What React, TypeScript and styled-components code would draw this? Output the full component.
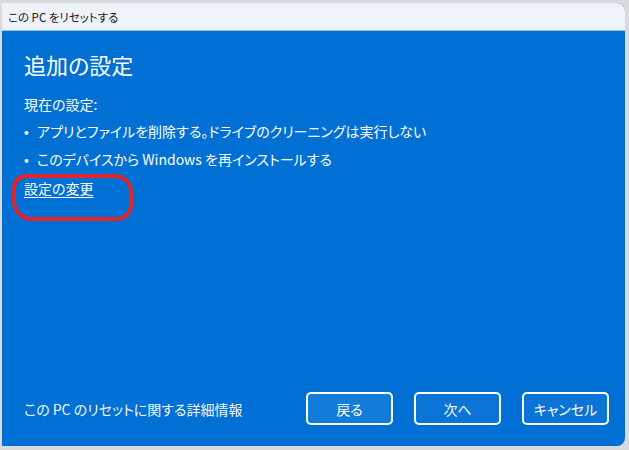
import React from 'react';
import styled, { createGlobalStyle } from 'styled-components';

const GlobalStyle = createGlobalStyle`
  html, body {
    margin: 0;
    padding: 0;
    background: #d9dadc;
  }
  body {
    font-family: "Noto Sans CJK JP", "Noto Sans", sans-serif;
    font-feature-settings: "palt";
  }
`;

const settings = [
  'アプリとファイルを削除する。ドライブのクリーニングは実行しない',
  'このデバイスから Windows を再インストールする',
];

const App: React.FC = () => {
  return (
    <Page>
      <GlobalStyle />
      <Window>
        <TitleBar>この PC をリセットする</TitleBar>
        <Body>
          <Heading>追加の設定</Heading>
          <Label>現在の設定:</Label>
          <BulletList>
            {settings.map((s) => (
              <Bullet key={s}>{s}</Bullet>
            ))}
          </BulletList>
          <LinkWrap>
            <ChangeLink href="#">設定の変更</ChangeLink>
            <Highlight />
          </LinkWrap>
          <Footer>
            <InfoText>この PC のリセットに関する詳細情報</InfoText>
            <Buttons>
              <Button $tint>戻る</Button>
              <Button>次へ</Button>
              <Button>キャンセル</Button>
            </Buttons>
          </Footer>
        </Body>
      </Window>
    </Page>
  );
};
export default App;

const Page = styled.div`
  width: 629px;
  height: 450px;
  padding: 3px 0 0 2px;
  box-sizing: border-box;
  overflow: hidden;
`;

const Window = styled.div`
  width: 623px;
  height: 443px;
  display: flex;
  flex-direction: column;
  border-radius: 0 8px 8px 0;
  overflow: hidden;
  background: #0070d5;
`;

const TitleBar = styled.div`
  height: 27px;
  flex-shrink: 0;
  display: flex;
  align-items: center;
  padding-left: 6px;
  background: #eef2f9;
  border-bottom: 1px solid #8fc0ec;
  color: #1a1a1a;
  font-size: 11.5px;
`;

const Body = styled.div`
  flex: 1;
  display: flex;
  flex-direction: column;
  padding: 18px 16px 21px 22px;
  color: #ffffff;
`;

const Heading = styled.h1`
  margin: 0 0 15px;
  font-size: 22px;
  font-weight: 400;
  line-height: 30px;
`;

const Label = styled.div`
  font-size: 14px;
  line-height: 20px;
  margin-bottom: 7px;
`;

const BulletList = styled.ul`
  list-style: none;
  margin: 0;
  padding: 0;
  display: flex;
  flex-direction: column;
  gap: 8px;
`;

const Bullet = styled.li`
  font-size: 14px;
  line-height: 20px;
  display: flex;
  &::before {
    content: '•';
    width: 13px;
    flex-shrink: 0;
  }
`;

const LinkWrap = styled.div`
  position: relative;
  display: flex;
  height: 20px;
  margin-top: 9px;
  align-self: flex-start;
`;

const ChangeLink = styled.a`
  color: #ffffff;
  font-size: 14px;
  line-height: 20px;
  text-decoration: underline;
  text-underline-offset: 3px;
`;

const Highlight = styled.div`
  position: absolute;
  left: -12px;
  top: -4px;
  width: 121px;
  height: 47px;
  box-sizing: border-box;
  border: 4px solid #e0252e;
  border-radius: 14px 18px 16px 20px;
`;

const Footer = styled.div`
  margin-top: auto;
  display: flex;
  align-items: center;
  justify-content: space-between;
`;

const InfoText = styled.div`
  font-size: 14px;
  color: #f2f7fd;
`;

const Buttons = styled.div`
  display: flex;
  gap: 21px;
`;

const Button = styled.button<{ $tint?: boolean }>`
  width: 87px;
  height: 33px;
  border: 2px solid #ffffff;
  border-radius: 5px;
  background: ${({ $tint }) => ($tint ? '#127cda' : '#0a74d7')};
  color: #ffffff;
  font-family: inherit;
  font-feature-settings: "palt";
  font-size: 14px;
  cursor: pointer;
`;
